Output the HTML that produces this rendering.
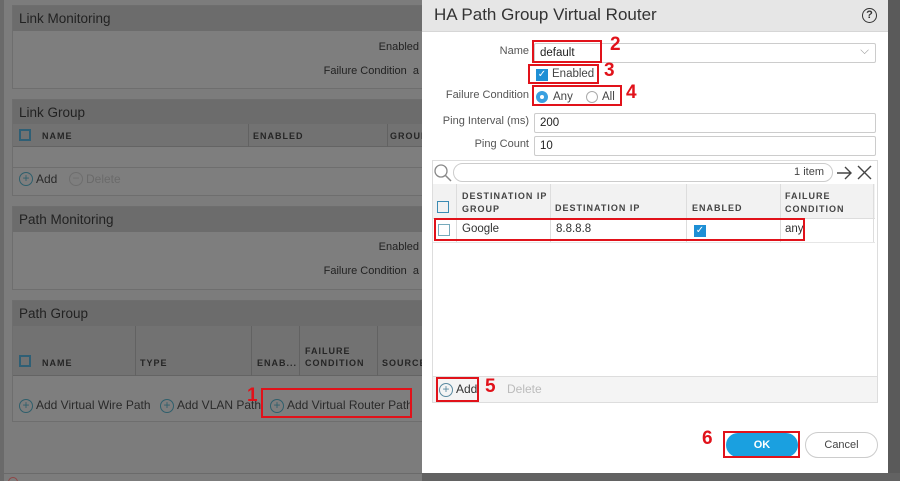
<!DOCTYPE html><html><head><style>
*{box-sizing:border-box;margin:0;padding:0}
html,body{width:900px;height:481px;overflow:hidden}
html{background:#7c7c7c}
body{background:#7c7c7c;font-family:"Liberation Sans",sans-serif;position:relative;font-size:11px;color:#333}
.a{position:absolute}
.pan{position:absolute;left:12px;width:420px;background:#7e7e7e;border:1px solid #6e6e6e}
.ph{background:#6c6c6c;height:25px;font-size:13.5px;color:#222;padding:5px 6px}
.lbl{color:#222;font-size:11px}
.col{font-size:9px;letter-spacing:1px;font-weight:bold;color:#252525}
.cb{position:absolute;width:12px;height:12px;border:2px solid #2f5f75}
.red{position:absolute;border:2px solid #e1121a}
.num{position:absolute;color:#e1121a;font-weight:bold;font-size:19px;font-family:"Liberation Sans",sans-serif}
.inp{position:absolute;background:#fff;border:1px solid #ccc;border-radius:2px;font-size:11.5px;padding:3px 5px;color:#222}
.pl{position:absolute;width:14px;height:14px;border:1px solid #2f5f6c;border-radius:50%;font-size:12px;line-height:11px;text-align:center;color:#2f5f6c}
</style></head><body>
<div class="a" style="left:0;top:0;width:900px;height:481px;background:#7c7c7c"></div>
<div class="a" style="left:0;top:0;width:4px;height:481px;background:#6a6a6a"></div>
<div class="pan" style="top:5px;height:84px"><div class="ph">Link Monitoring</div>
<div class="a lbl" style="right:12px;top:35px">Enabled</div>
<div class="a lbl" style="right:12px;top:59px">Failure Condition&nbsp; a</div></div>
<div class="pan" style="top:99px;height:97px"><div class="ph">Link Group</div>
<div class="a" style="left:0;top:24px;width:420px;height:23px;background:#727272;border-bottom:1px solid #646464"></div>
<div class="cb" style="left:6px;top:29px"></div>
<div class="a col" style="left:29px;top:31px">NAME</div>
<div class="a" style="left:235px;top:24px;width:1px;height:23px;background:#626262"></div>
<div class="a col" style="left:240px;top:31px">ENABLED</div>
<div class="a" style="left:374px;top:24px;width:1px;height:23px;background:#626262"></div>
<div class="a col" style="left:377px;top:31px">GROUP</div>
<div class="a" style="left:0;top:67px;width:420px;height:1px;background:#6e6e6e"></div>
<div class="pl" style="left:6px;top:72px">+</div><div class="a" style="left:23px;top:72px;font-size:12px;color:#2a2a2a">Add</div>
<div class="pl" style="left:56px;top:72px;border-color:#6e6e6e;color:#6e6e6e">−</div><div class="a" style="left:73px;top:72px;font-size:12px;color:#6a6a6a">Delete</div></div>
<div class="pan" style="top:206px;height:84px"><div class="ph">Path Monitoring</div>
<div class="a lbl" style="right:12px;top:34px">Enabled</div>
<div class="a lbl" style="right:12px;top:58px">Failure Condition&nbsp; a</div></div>
<div class="pan" style="top:300px;height:122px"><div class="ph">Path Group</div>
<div class="a" style="left:0;top:25px;width:420px;height:50px;background:#727272;border-bottom:1px solid #646464"></div>
<div class="cb" style="left:6px;top:54px"></div>
<div class="a col" style="left:29px;top:57px">NAME</div>
<div class="a" style="left:122px;top:25px;width:1px;height:50px;background:#626262"></div>
<div class="a col" style="left:127px;top:57px">TYPE</div>
<div class="a" style="left:238px;top:25px;width:1px;height:50px;background:#626262"></div>
<div class="a col" style="left:244px;top:57px">ENAB...</div>
<div class="a" style="left:286px;top:25px;width:1px;height:50px;background:#626262"></div>
<div class="a col" style="left:292px;top:44px;line-height:12px">FAILURE<br>CONDITION</div>
<div class="a" style="left:364px;top:25px;width:1px;height:50px;background:#626262"></div>
<div class="a col" style="left:369px;top:57px">SOURCE</div>
<div class="pl" style="left:6px;top:98px">+</div><div class="a" style="left:23px;top:97px;font-size:12px;color:#2a2a2a">Add Virtual Wire Path</div>
<div class="pl" style="left:147px;top:98px">+</div><div class="a" style="left:164px;top:97px;font-size:12px;color:#2a2a2a">Add VLAN Path</div>
<div class="pl" style="left:257px;top:98px">+</div><div class="a" style="left:274px;top:97px;font-size:12px;color:#2a2a2a">Add Virtual Router Path</div></div>
<div class="red" style="left:261px;top:388px;width:151px;height:30px"></div>
<div class="num" style="left:247px;top:385px">1</div>
<div class="a" style="left:0;top:473px;width:422px;height:1px;background:#6a6a6a"></div>
<div class="a" style="left:8px;top:477px;width:10px;height:10px;border:1px solid #904545;border-radius:50%"></div>
<div class="a" style="left:888px;top:0;width:12px;height:481px;background:#5a5a5a"></div>
<div class="a" style="left:422px;top:473px;width:478px;height:8px;background:#626262"></div>
<div class="a" style="left:422px;top:0;width:466px;height:473px;background:#fff">
<div class="a" style="left:0;top:0;width:466px;height:32px;background:#e6e6e6;border-bottom:1px solid #d6d6d6"></div>
<div class="a" style="left:12px;top:5px;font-size:17px;color:#333">HA Path Group Virtual Router</div>
<div class="a" style="left:440px;top:8px;width:15px;height:15px;border:1.5px solid #333;border-radius:50%;font-size:11px;font-weight:bold;text-align:center;line-height:12px">?</div>
<div class="a lbl" style="right:359px;top:45px;color:#555">Name</div>
<div class="a lbl" style="right:359px;top:89px;color:#555">Failure Condition</div>
<div class="a lbl" style="right:359px;top:115px;color:#555">Ping Interval (ms)</div>
<div class="a lbl" style="right:359px;top:138px;color:#555">Ping Count</div>
</div>
<div class="inp" style="left:534px;top:43px;width:342px;height:20px">default<span style="position:absolute;right:6px;top:1px;color:#999">⌵</span></div>
<div class="a" style="left:536px;top:69px;width:12px;height:12px;background:#1e8fd5;color:#fff;font-size:10px;line-height:12px;text-align:center">✓</div>
<div class="a" style="left:552px;top:68px;font-size:11.5px;color:#444">Enabled</div>
<div class="a" style="left:536px;top:91px;width:12px;height:12px;border-radius:50%;background:#3aa0e0;border:3px solid #3aa0e0"><div style="width:4px;height:4px;background:#fff;border-radius:50%;margin:1px"></div></div>
<div class="a" style="left:553px;top:91px;font-size:11.5px;color:#444">Any</div>
<div class="a" style="left:586px;top:91px;width:12px;height:12px;border-radius:50%;border:1px solid #aaa"></div>
<div class="a" style="left:602px;top:91px;font-size:11.5px;color:#444">All</div>
<div class="inp" style="left:534px;top:113px;width:342px;height:20px">200</div>
<div class="inp" style="left:534px;top:136px;width:342px;height:20px">10</div>
<div class="red" style="left:532px;top:40px;width:70px;height:23px"></div><div class="num" style="left:610px;top:34px">2</div>
<div class="red" style="left:528px;top:64px;width:71px;height:20px"></div><div class="num" style="left:604px;top:60px">3</div>
<div class="red" style="left:532px;top:85px;width:90px;height:21px"></div><div class="num" style="left:626px;top:82px">4</div>
<div class="a" style="left:432px;top:160px;width:446px;height:243px;border:1px solid #ddd;background:#fff"></div>
<svg class="a" style="left:433px;top:163px" width="20" height="20" viewBox="0 0 20 20"><circle cx="8" cy="8" r="6" fill="none" stroke="#888" stroke-width="1.3"/><line x1="12.5" y1="12.5" x2="18" y2="18" stroke="#888" stroke-width="1.5"/></svg>
<div class="a" style="left:453px;top:163px;width:380px;height:19px;border:1px solid #ccc;border-radius:10px;font-size:11px;text-align:right;padding:2px 8px;color:#444">1 item</div>
<svg class="a" style="left:836px;top:164px" width="40" height="18" viewBox="0 0 40 18"><path d="M1 9H15M9 3l6 6-6 6" fill="none" stroke="#444" stroke-width="1.4"/><path d="M22 2l13 13M35 2L22 15" stroke="#444" stroke-width="1.4"/></svg>
<div class="a" style="left:433px;top:184px;width:442px;height:35px;background:#f2f2f2;border-bottom:1px solid #ddd"></div>
<div class="a" style="left:437px;top:201px;width:12px;height:12px;border:1.5px solid #3b8bb3"></div>
<div class="a col" style="left:462px;top:190px;line-height:13px;color:#444">DESTINATION IP<br>GROUP</div>
<div class="a col" style="left:555px;top:203px;color:#444">DESTINATION IP</div>
<div class="a col" style="left:692px;top:203px;color:#444">ENABLED</div>
<div class="a col" style="left:785px;top:190px;line-height:13px;color:#444">FAILURE<br>CONDITION</div>
<div class="a" style="left:456px;top:184px;width:1px;height:58px;background:#ddd"></div>
<div class="a" style="left:550px;top:184px;width:1px;height:58px;background:#ddd"></div>
<div class="a" style="left:686px;top:184px;width:1px;height:58px;background:#ddd"></div>
<div class="a" style="left:780px;top:184px;width:1px;height:58px;background:#ddd"></div>
<div class="a" style="left:873px;top:184px;width:1px;height:58px;background:#ddd"></div>
<div class="a" style="left:433px;top:242px;width:442px;height:1px;background:#e6e6e6"></div>
<div class="a" style="left:438px;top:224px;width:12px;height:12px;border:1.5px solid #7ab"></div>
<div class="a" style="left:462px;top:223px;font-size:11.5px">Google</div>
<div class="a" style="left:556px;top:223px;font-size:11.5px">8.8.8.8</div>
<div class="a" style="left:694px;top:225px;width:12px;height:12px;background:#1e8fd5;color:#fff;font-size:10px;line-height:12px;text-align:center">✓</div>
<div class="a" style="left:785px;top:223px;font-size:11.5px">any</div>
<div class="red" style="left:434px;top:218px;width:371px;height:23px"></div>
<div class="a" style="left:433px;top:376px;width:444px;height:26px;background:#f4f4f4;border-top:1px solid #ddd"></div>
<div class="pl" style="left:439px;top:383px;border-color:#5a8aa0;color:#5a8aa0">+</div><div class="a" style="left:456px;top:382px;font-size:12px">Add</div>
<div class="a" style="left:507px;top:382px;font-size:12px;color:#bbb">Delete</div>
<div class="red" style="left:436px;top:377px;width:43px;height:25px"></div><div class="num" style="left:485px;top:376px">5</div>
<div class="a" style="left:726px;top:433px;width:72px;height:24px;background:#1aa0e0;border-radius:12px;color:#fff;font-weight:bold;font-size:11px;text-align:center;line-height:24px">OK</div>
<div class="red" style="left:723px;top:431px;width:77px;height:27px"></div><div class="num" style="left:702px;top:428px">6</div>
<div class="a" style="left:805px;top:432px;width:73px;height:26px;border:1px solid #ccc;border-radius:13px;font-size:11px;text-align:center;line-height:24px;color:#444">Cancel</div>
</body></html>
